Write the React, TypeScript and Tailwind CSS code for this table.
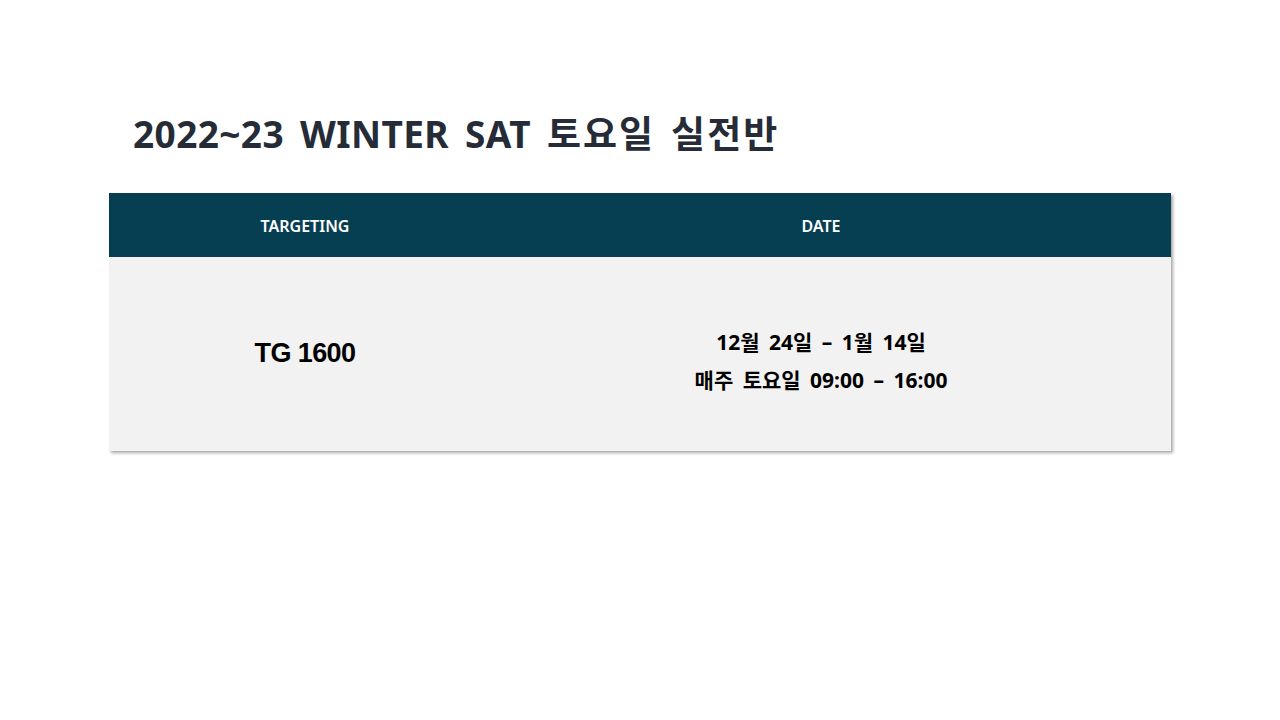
import React from "react";

const kr = "font-['Noto_Sans','Noto_Sans_CJK_KR',sans-serif]";

export default function App() {
  return (
    <div className="w-[1280px] h-[720px] bg-white relative overflow-hidden">
      <div className="pt-[108px] pl-[133px]">
        <h1
          className={`${kr} text-[37px] font-bold text-[#252c38] leading-[52px] tracking-[0.4px] [word-spacing:6px]`}
        >
          2022~23 WINTER SAT <span className="tracking-[2px]">토요일</span>{" "}
          <span className="tracking-[2px]">실전반</span>
        </h1>
      </div>

      <div className="mt-[33px] ml-[109px] w-[1062px] shadow-[2px_2px_3px_rgba(0,0,0,0.35)]">
        <div className="flex h-[64px] bg-[#073f52] text-white pt-[2px]">
          <div className={`${kr} w-[392px] flex items-center justify-center text-[16px] font-semibold`}>
            TARGETING
          </div>
          <div className={`${kr} flex-1 pr-[30px] flex items-center justify-center text-[16px] font-semibold`}>
            DATE
          </div>
        </div>
        <div className="flex h-[194px] bg-[#f2f2f2] text-black">
          <div className="w-[392px] flex items-center justify-center pb-[2px]">
            <span className="font-['Liberation_Sans',Arial,sans-serif] font-bold text-[27px] tracking-[-0.6px]">
              TG 1600
            </span>
          </div>
          <div className={`${kr} flex-1 pr-[30px] pt-[14px] flex flex-col items-center justify-center text-[21px] font-bold leading-[38px] [word-spacing:4px]`}>
            <span>12월 24일 – 1월 14일</span>
            <span>매주 토요일 09:00 – 16:00</span>
          </div>
        </div>
      </div>
    </div>
  );
}
